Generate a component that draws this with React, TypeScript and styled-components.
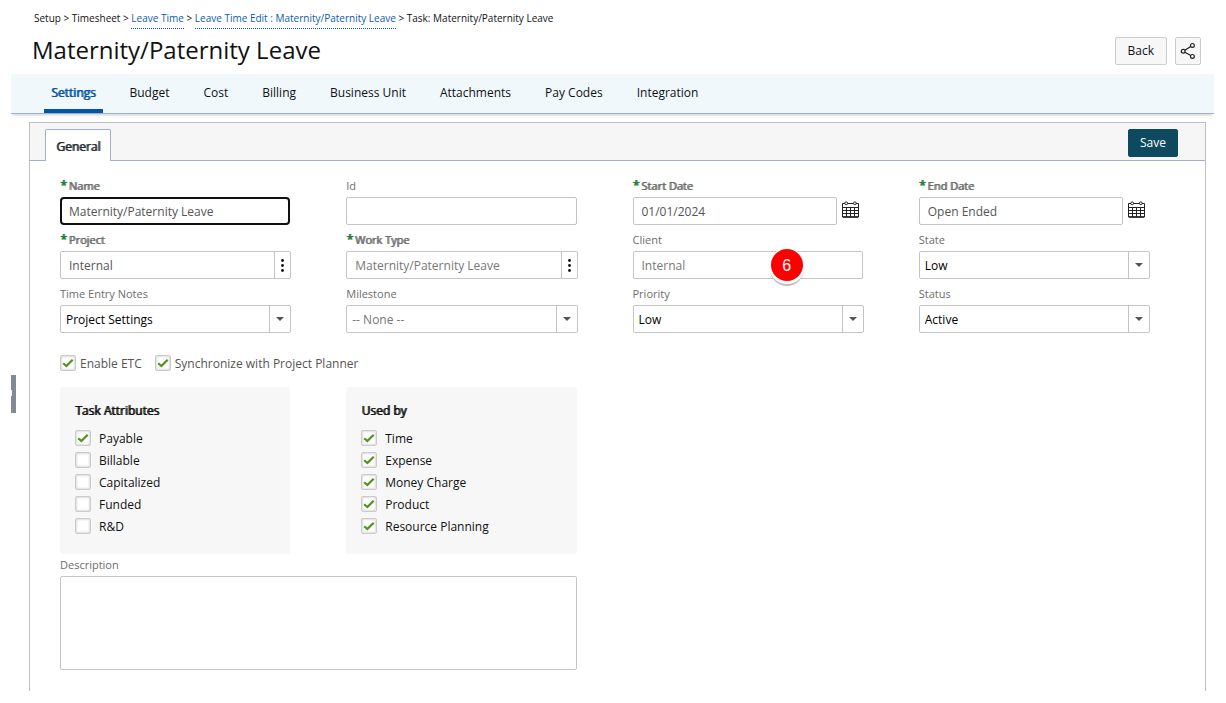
import React, { useEffect, useRef, type ReactNode } from "react";
import styled, { createGlobalStyle, css } from "styled-components";

const GlobalStyle = createGlobalStyle`
  *, *::before, *::after { box-sizing: border-box; }
  body {
    margin: 0;
    background: #fff;
    color: #111;
    font-family: "Open Sans", "Noto Sans", sans-serif;
    font-size: 12px;
    line-height: 18px;
  }
  button, input, select, textarea { font: inherit; color: inherit; margin: 0; }
`;

const emphasis = css`
  font-weight: 400;
  text-shadow: 1px 0 0 currentColor;
`;

const Page = styled.main`
  position: relative;
  padding: 9px 12px 12px 11px;
`;

const Breadcrumb = styled.nav`
  padding-left: 23px;
  font-size: 10px;
  line-height: 18px;
  white-space: nowrap;
`;

const CrumbLink = styled.a`
  padding-bottom: 3px;
  color: #0b5cad;
  text-decoration: none;
  border-bottom: 1px dotted #0b5cad;
`;

const TitleRow = styled.header`
  display: flex;
  align-items: flex-start;
  gap: 8px;
  height: 47px;
  padding: 10px 13px 0 21px;
`;

const Title = styled.h1`
  flex: 1;
  margin: 0;
  font-size: 24px;
  font-weight: 400;
  line-height: 26px;
`;

const Button = styled.button<{ $primary?: boolean; $icon?: boolean }>`
  display: flex;
  align-items: center;
  justify-content: center;
  height: 28px;
  padding: ${(p) => (p.$icon ? "0 4px" : p.$primary ? "0 11px" : "0 12px")};
  border: 1px solid ${(p) => (p.$primary ? "#0d4a60" : "#ccc")};
  border-radius: 2px;
  background: ${(p) => (p.$primary ? "#0d4a60" : "#f7f7f7")};
  color: ${(p) => (p.$primary ? "#fff" : "#111")};
`;

const TabBar = styled.nav`
  display: flex;
  gap: 20px;
  height: 40px;
  padding-left: 33px;
  background: #f0f8fc;
  border-bottom: 1px solid #9cb1cb;
  box-shadow: 0 3px 3px -2px #ccc;
`;

const TabLink = styled.a<{ $active?: boolean }>`
  padding: 10px 7px 0;
  color: #111;
  text-decoration: none;
  border-bottom: 4px solid transparent;
  ${(p) =>
    p.$active &&
    css`
      ${emphasis}
      color: #0554a4;
      border-color: #0554a4;
    `}
`;

const Panel = styled.section`
  margin: 8px 8px 0 18px;
  border: 1px solid #bfbfbf;
  border-bottom: 0;
`;

const PanelHeader = styled.div`
  display: flex;
  justify-content: space-between;
  align-items: flex-start;
  height: 38px;
  padding: 6px 27px 0 15px;
  background: #f6f6f6;
  border-bottom: 1px solid #9cb1cb;
`;

const PanelTab = styled.h2`
  ${emphasis}
  height: 32px;
  margin: 0;
  padding: 8px 10px 0;
  background: #fff;
  border: 1px solid #9cb1cb;
  border-bottom: 0;
  border-radius: 2px 2px 0 0;
  color: #263238;
  font-size: 12px;
  line-height: 18px;
`;

const Form = styled.form`
  padding: 10px 0 21px 30px;
`;

const Grid = styled.div`
  display: grid;
  grid-template-columns: repeat(4, minmax(0, 1fr));
`;

const Cell = styled.div<{ $span?: number; $combo?: boolean }>`
  grid-column: span ${(p) => p.$span ?? 1};
  padding-right: ${(p) => (p.$combo ? 55 : 56)}px;
`;

const Label = styled.label<{ $required?: boolean }>`
  display: block;
  height: 26px;
  padding-top: 6px;
  color: #6d6d6d;
  font-size: 11px;
  line-height: 18px;
  ${(p) => p.$required && emphasis}
`;

const Star = styled.span`
  margin-right: 2px;
  color: #1c8038;
  font-size: 12px;
  font-weight: 600;
  line-height: 1;
`;

const boxed = css`
  display: block;
  width: 100%;
  height: 28px;
  border: 1px solid #c4c4c4;
  border-radius: 2px;
  background: #fff;
  outline: 0;
`;

const TextInput = styled.input<{ $muted?: boolean }>`
  ${boxed}
  flex: 1;
  min-width: 0;
  padding: 0 8px;
  color: ${(p) => (p.$muted ? "#777" : "#555")};
  &:focus {
    border: 2px solid #101010;
    border-radius: 4px;
    padding: 0 7px;
  }
`;

const InputRow = styled.div`
  position: relative;
  display: flex;
  align-items: center;
`;

const MenuButton = styled.button`
  display: flex;
  align-items: center;
  justify-content: center;
  width: 17px;
  height: 28px;
  margin-left: -1px;
  padding: 0;
  background: #fff;
  border: 1px solid #c4c4c4;
  border-radius: 0 2px 2px 0;
`;

const CalendarButton = styled.button`
  display: flex;
  width: 27px;
  padding: 0 0 4px 5px;
  border: 0;
  background: none;
`;

const SelectInput = styled.select<{ $muted?: boolean }>`
  ${boxed}
  appearance: none;
  padding: 2px 26px 0 5px;
  color: ${(p) => (p.$muted ? "#777" : "#000")};
`;

const SelectArrow = styled.span`
  position: absolute;
  top: 1px;
  right: 1px;
  bottom: 1px;
  display: flex;
  align-items: center;
  justify-content: center;
  width: 21px;
  border-left: 1px solid #c4c4c4;
  pointer-events: none;
`;

const StepBadge = styled.span`
  position: absolute;
  top: -2px;
  left: 60%;
  width: 32px;
  height: 32px;
  border-radius: 50%;
  background: #fe0000;
  box-shadow: 0 1px 0 2px #fff, 0 4px 1px 1px #bbb;
  color: #fff;
  font-family: "Liberation Sans", Arial, sans-serif;
  font-size: 16px;
  line-height: 34px;
  text-align: center;
`;

const CheckLabel = styled.label<{ $wide?: boolean }>`
  display: flex;
  align-items: center;
  gap: ${(p) => (p.$wide ? 8 : 4)}px;
  height: 22px;
`;

const CheckText = styled.span`
  padding-top: 1px;
`;

const CheckSlot = styled.span`
  display: grid;
  > * { grid-area: 1 / 1; }
  > svg { visibility: hidden; pointer-events: none; }
  > input:checked + svg { visibility: visible; }
`;

const CheckInput = styled.input`
  appearance: none;
  width: 16px;
  height: 16px;
  border: 1px solid #cbcbcb;
  border-radius: 2px;
  background: #fff;
  box-shadow: inset 0 0 2px 1px #ddd;
`;

const CheckRow = styled.div`
  display: flex;
  gap: 13px;
  padding: 19px 0 13px;
  color: #555;
`;

const Group = styled.fieldset`
  min-width: 0;
  height: 167px;
  margin: 0;
  padding: 15px;
  border: 0;
  border-radius: 3px;
  background: #f7f7f7;
`;

const GroupTitle = styled.legend`
  ${emphasis}
  float: left;
  width: 100%;
  padding: 0 0 7px;
  + * { clear: both; }
`;

const Description = styled.textarea`
  ${boxed}
  height: 94px;
  resize: none;
`;

const DescriptionLabel = styled(Label)`
  height: 22px;
  padding-top: 2px;
`;

const SideHandle = styled.button`
  position: absolute;
  left: 11px;
  top: 375px;
  width: 5px;
  height: 38px;
  padding: 0;
  border: 0;
  background: #828a95;
  &::before {
    content: "";
    position: absolute;
    left: 0;
    top: 15px;
    width: 1px;
    height: 6px;
    background: #fff;
  }
`;

const ShareIcon = () => (
  <svg width="16" height="18" viewBox="0 0 16 18" fill="none" stroke="#222" strokeWidth="1.2" aria-hidden="true">
    <circle cx="3.2" cy="9.3" r="1.9" />
    <circle cx="12.4" cy="3.4" r="1.9" />
    <circle cx="12.4" cy="14.4" r="1.9" />
    <path d="M4.9 8.3 10.7 4.4M4.9 10.3l5.8 3.3" />
  </svg>
);

const CalendarIcon = () => (
  <svg width="17" height="17" viewBox="0 0 17 17" fill="none" stroke="#222" aria-hidden="true">
    <path d="M3 2.5H.5v13.5h16V2.5H14M5.5 2.5h6" />
    <path d="M.5 6.5h16M.5 9.5h16M.5 12.5h16M4.5 6.5V16M8.5 6.5V16M12.5 6.5V16" />
    <path d="M1 16h15" strokeWidth="1.5" />
    <circle cx="4.2" cy="2.3" r="1.4" />
    <circle cx="12.8" cy="2.3" r="1.4" />
  </svg>
);

const DotsIcon = () => (
  <svg width="3" height="13" viewBox="0 0 3 13" fill="#111" aria-hidden="true">
    <circle cx="1.5" cy="1.5" r="1.4" />
    <circle cx="1.5" cy="6.5" r="1.4" />
    <circle cx="1.5" cy="11.5" r="1.4" />
  </svg>
);

const ArrowIcon = () => (
  <svg width="8" height="4" viewBox="0 0 8 4" fill="#555" aria-hidden="true">
    <path d="M0 0h8L4 4z" />
  </svg>
);

const CheckIcon = () => (
  <svg width="16" height="16" viewBox="0 0 16 16" fill="none" stroke="#4e931a" strokeWidth="2.2" aria-hidden="true">
    <path d="M3.2 8.2 6.4 11.1 12.7 4.8" />
  </svg>
);

type FieldProps = { id: string; label: string; required?: boolean; combo?: boolean; children: ReactNode };

const Field = ({ id, label, required, combo, children }: FieldProps) => (
  <Cell $combo={combo}>
    <Label htmlFor={id} $required={required}>
      {required && <Star>*</Star>}
      {label}
    </Label>
    <InputRow>{children}</InputRow>
  </Cell>
);

const Select = ({ id, value, muted }: { id: string; value: string; muted?: boolean }) => (
  <>
    <SelectInput id={id} $muted={muted} defaultValue={value}>
      <option>{value}</option>
    </SelectInput>
    <SelectArrow>
      <ArrowIcon />
    </SelectArrow>
  </>
);

const Check = ({ label, checked, wide }: { label: string; checked?: boolean; wide?: boolean }) => (
  <CheckLabel $wide={wide}>
    <CheckSlot>
      <CheckInput type="checkbox" defaultChecked={checked} />
      <CheckIcon />
    </CheckSlot>
    <CheckText>{label}</CheckText>
  </CheckLabel>
);

const tabs = ["Settings", "Budget", "Cost", "Billing", "Business Unit", "Attachments", "Pay Codes", "Integration"];
const attributes = ["Payable", "Billable", "Capitalized", "Funded", "R&D"];
const usedBy = ["Time", "Expense", "Money Charge", "Product", "Resource Planning"];

export default function App() {
  const nameRef = useRef<HTMLInputElement>(null);

  useEffect(() => {
    nameRef.current?.focus();
    nameRef.current?.setSelectionRange(0, 0);
  }, []);

  return (
    <>
      <GlobalStyle />
      <Page>
        <Breadcrumb aria-label="Breadcrumb">
          Setup &gt; Timesheet &gt; <CrumbLink href="#leave-time">Leave Time</CrumbLink> &gt;{" "}
          <CrumbLink href="#leave-time-edit">Leave Time Edit : Maternity/Paternity Leave</CrumbLink> &gt; Task:
          Maternity/Paternity Leave
        </Breadcrumb>
        <TitleRow>
          <Title>Maternity/Paternity Leave</Title>
          <Button type="button">Back</Button>
          <Button type="button" $icon aria-label="Share">
            <ShareIcon />
          </Button>
        </TitleRow>
        <TabBar>
          {tabs.map((tab, i) => (
            <TabLink key={tab} href="#tab" $active={i === 0}>
              {tab}
            </TabLink>
          ))}
        </TabBar>
        <Panel>
          <PanelHeader>
            <PanelTab>General</PanelTab>
            <Button type="submit" form="task" $primary>
              Save
            </Button>
          </PanelHeader>
          <Form id="task">
            <Grid>
              <Field id="name" label="Name" required>
                <TextInput id="name" ref={nameRef} defaultValue="Maternity/Paternity Leave" />
              </Field>
              <Field id="code" label="Id">
                <TextInput id="code" />
              </Field>
              <Field id="start" label="Start Date" required combo>
                <TextInput id="start" defaultValue="01/01/2024" />
                <CalendarButton type="button" aria-label="Pick start date">
                  <CalendarIcon />
                </CalendarButton>
              </Field>
              <Field id="end" label="End Date" required combo>
                <TextInput id="end" defaultValue="Open Ended" />
                <CalendarButton type="button" aria-label="Pick end date">
                  <CalendarIcon />
                </CalendarButton>
              </Field>
              <Field id="project" label="Project" required combo>
                <TextInput id="project" defaultValue="Internal" />
                <MenuButton type="button" aria-label="Choose project">
                  <DotsIcon />
                </MenuButton>
              </Field>
              <Field id="work" label="Work Type" required combo>
                <TextInput id="work" $muted defaultValue="Maternity/Paternity Leave" />
                <MenuButton type="button" aria-label="Choose work type">
                  <DotsIcon />
                </MenuButton>
              </Field>
              <Field id="client" label="Client">
                <TextInput id="client" $muted defaultValue="Internal" />
                <StepBadge>6</StepBadge>
              </Field>
              <Field id="state" label="State" combo>
                <Select id="state" value="Low" />
              </Field>
              <Field id="notes" label="Time Entry Notes" combo>
                <Select id="notes" value="Project Settings" />
              </Field>
              <Field id="milestone" label="Milestone" combo>
                <Select id="milestone" value="-- None --" muted />
              </Field>
              <Field id="priority" label="Priority" combo>
                <Select id="priority" value="Low" />
              </Field>
              <Field id="status" label="Status" combo>
                <Select id="status" value="Active" />
              </Field>
            </Grid>
            <CheckRow>
              <Check label="Enable ETC" checked />
              <Check label="Synchronize with Project Planner" checked />
            </CheckRow>
            <Grid>
              <Cell>
                <Group>
                  <GroupTitle>Task Attributes</GroupTitle>
                  {attributes.map((name) => (
                    <Check key={name} label={name} checked={name === "Payable"} wide />
                  ))}
                </Group>
              </Cell>
              <Cell>
                <Group>
                  <GroupTitle>Used by</GroupTitle>
                  {usedBy.map((name) => (
                    <Check key={name} label={name} checked wide />
                  ))}
                </Group>
              </Cell>
            </Grid>
            <Grid>
              <Cell $span={2}>
                <DescriptionLabel htmlFor="description">Description</DescriptionLabel>
                <Description id="description" />
              </Cell>
            </Grid>
          </Form>
        </Panel>
        <SideHandle type="button" aria-label="Open side panel" />
      </Page>
    </>
  );
}
